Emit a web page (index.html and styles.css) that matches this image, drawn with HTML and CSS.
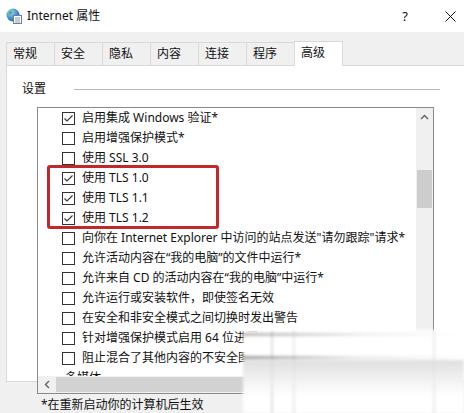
FILE: index.html
```html
<!DOCTYPE html>
<html lang="zh-CN">
<head>
<meta charset="utf-8">
<title>Internet 属性</title>
<link rel="stylesheet" href="styles.css">
</head>
<body>
<div class="titlebar">
  <svg class="app-icon" viewBox="0 0 16 16">
    <defs>
      <radialGradient id="g" cx="0.35" cy="0.3" r="0.8">
        <stop offset="0" stop-color="#9fd3f3"/>
        <stop offset="0.6" stop-color="#3d8fd0"/>
        <stop offset="1" stop-color="#1c5f9e"/>
      </radialGradient>
    </defs>
    <circle cx="7" cy="7" r="6.5" fill="url(#g)"/>
    <path d="M3 4 Q5 2.5 6.5 4 Q6 6 4 6.5 Q2.5 6 3 4Z" fill="#4fae4a"/>
    <path d="M8 8.5 Q10 7.5 11 9 Q10 11 8.5 11Z" fill="#4fae4a"/>
    <rect x="7.5" y="7.5" width="8" height="8" fill="#fff" stroke="#6d7f99"/>
    <path d="M9 10h5M9 12h5M9 14h5" stroke="#6d7f99" stroke-width="0.8"/>
  </svg>
  <span class="title">Internet 属性</span>
  <span class="help">?</span>
  <svg class="close" viewBox="0 0 11 11"><path d="M0.5 0.5L10.5 10.5M10.5 0.5L0.5 10.5" stroke="#111" stroke-width="1"/></svg>
</div>

<div class="main">
  <div class="tabs">
    <div class="tab">常规</div>
    <div class="tab">安全</div>
    <div class="tab">隐私</div>
    <div class="tab">内容</div>
    <div class="tab">连接</div>
    <div class="tab">程序</div>
    <div class="tab active">高级</div>
  </div>
  <div class="panel">
    <div class="group-head"><span>设置</span><div class="rule"></div></div>
    <div class="listbox">
      <div class="list">
        <div class="row"><span class="cb checked"><svg viewBox="0 0 11 11"><path d="M1.5 5.5L4 8L9.5 2.5"/></svg></span>启用集成 Windows 验证*</div>
        <div class="row"><span class="cb"></span>启用增强保护模式*</div>
        <div class="row"><span class="cb"></span>使用 SSL 3.0</div>
        <div class="row"><span class="cb checked"><svg viewBox="0 0 11 11"><path d="M1.5 5.5L4 8L9.5 2.5"/></svg></span>使用 TLS 1.0</div>
        <div class="row"><span class="cb checked"><svg viewBox="0 0 11 11"><path d="M1.5 5.5L4 8L9.5 2.5"/></svg></span>使用 TLS 1.1</div>
        <div class="row"><span class="cb checked"><svg viewBox="0 0 11 11"><path d="M1.5 5.5L4 8L9.5 2.5"/></svg></span>使用 TLS 1.2</div>
        <div class="row"><span class="cb"></span>向你在 Internet Explorer 中访问的站点发送"请勿跟踪"请求*</div>
        <div class="row"><span class="cb"></span>允许活动内容在“我的电脑”的文件中运行*</div>
        <div class="row"><span class="cb"></span>允许来自 CD 的活动内容在“我的电脑”中运行*</div>
        <div class="row"><span class="cb"></span>允许运行或安装软件，即使签名无效</div>
        <div class="row"><span class="cb"></span>在安全和非安全模式之间切换时发出警告</div>
        <div class="row"><span class="cb"></span>针对增强保护模式启用 64 位进程*</div>
        <div class="row"><span class="cb"></span>阻止混合了其他内容的不安全图像</div>
        <div class="row group"><svg class="tri" viewBox="0 0 8 8"><path d="M7 1V7H1Z" fill="#555"/></svg>多媒体</div>
      </div>
      <div class="vscroll">
        <div class="arrow"><svg viewBox="0 0 9 6"><path d="M1 5L4.5 1.5L8 5" fill="none" stroke="#606060" stroke-width="1.4"/></svg></div>
        <div class="vthumb"></div>
      </div>
      <div class="hscroll">
        <div class="arrow"><svg viewBox="0 0 6 9"><path d="M5 1L1.5 4.5L5 8" fill="none" stroke="#606060" stroke-width="1.4"/></svg></div>
        <div class="hthumb"></div>
      </div>
      <div class="corner"></div>
    </div>
    <div class="note">*在重新启动你的计算机后生效</div>
  </div>
</div>

<div class="highlight"></div>
<div class="watermark"></div>
</body>
</html>
```

FILE: styles.css
```css
* { box-sizing: border-box; }
html, body { margin: 0; padding: 0; }
body {
  width: 464px;
  height: 413px;
  overflow: hidden;
  position: relative;
  background: #fff;
  font-family: "Noto Sans", "Noto Sans CJK SC", sans-serif;
  font-size: 12px;
  color: #111;
}

.titlebar {
  height: 32px;
  display: flex;
  align-items: center;
  padding-left: 6px;
  background: #fff;
}
.app-icon { width: 16px; height: 16px; margin-right: 5px; }
.title { line-height: 16px; }
.help { margin-left: auto; font-size: 13px; line-height: 16px; }
.close { width: 11px; height: 11px; margin-left: 37px; margin-right: 8px; }

.main {
  background: #f0f0f0;
  height: 381px;
  padding: 10px 0 0 6px;
}
.tabs {
  display: flex;
  align-items: flex-start;
  height: 24px;
  margin-bottom: -1px;
  position: relative;
  z-index: 1;
}
.tab {
  width: 49px;
  height: 23px;
  margin-right: -1px;
  border: 1px solid #d9d9d9;
  border-bottom: none;
  padding-left: 6px;
  line-height: 21px;
  background: #f0f0f0;
}
.tab.active {
  height: 25px;
  margin-top: -1px;
  background: #fff;
}

.panel {
  background: #fff;
  border: 1px solid #d9d9d9;
  border-right: none;
  height: 317px;
  padding: 14px 0 0 15px;
}
.group-head {
  display: flex;
  align-items: center;
  height: 18px;
}
.group-head span { line-height: 18px; }
.rule {
  width: 366px;
  height: 1px;
  margin-left: 28px;
  background: #b9b9b9;
}

.listbox {
  margin: 9px 0 0 15px;
  width: 397px;
  height: 287px;
  border: 1px solid #8a8a8a;
  display: grid;
  grid-template-columns: 1fr 17px;
  grid-template-rows: 268px 17px;
}
.list { overflow: hidden; }
.row {
  height: 20px;
  display: flex;
  align-items: center;
  padding-left: 24px;
  white-space: nowrap;
  line-height: 20px;
}
.cb {
  width: 13px;
  height: 13px;
  flex: none;
  border: 1px solid #333;
  margin-right: 7px;
  background: #fff;
}
.cb svg { display: block; width: 11px; height: 11px; }
.cb svg path { fill: none; stroke: #333; stroke-width: 1.1; }
.row.group { padding-left: 8px; }
.tri { width: 7px; height: 7px; margin-right: 12px; }

.vscroll { background: #f0f0f0; }
.vscroll .arrow, .hscroll .arrow {
  width: 17px;
  height: 17px;
  display: flex;
  align-items: center;
  justify-content: center;
  flex: none;
}
.vscroll .arrow svg { width: 9px; height: 6px; }
.hscroll .arrow svg { width: 6px; height: 9px; }
.vthumb {
  margin: 45px 1px 0;
  height: 38px;
  background: #cdcdcd;
}
.hscroll {
  background: #f0f0f0;
  display: flex;
  align-items: center;
}
.hthumb {
  margin-left: 1px;
  width: 250px;
  height: 15px;
  background: #d2d2d2;
}
.corner { background: #f0f0f0; }

.note {
  margin: 3px 0 0 19px;
  line-height: 16px;
  white-space: nowrap;
}

.highlight {
  position: absolute;
  left: 47px;
  top: 165px;
  width: 172px;
  height: 64px;
  border: 3px solid #c4272b;
  border-radius: 3px;
}

.watermark {
  position: absolute;
  left: 243px;
  top: 330px;
  width: 221px;
  height: 83px;
  background:
    linear-gradient(to right, rgba(120,120,120,0.55), rgba(200,200,200,0.3) 55%, rgba(255,255,255,0)) 0 3px / 100% 3px no-repeat,
    linear-gradient(to right, rgba(90,90,90,0.6), rgba(190,190,190,0.35) 50%, rgba(255,255,255,0)) 0 26px / 100% 3px no-repeat,
    linear-gradient(to bottom, rgba(215,215,215,0.8), rgba(235,235,235,0.6) 60%, rgba(255,255,255,0)) 0 30px / 100% 36px no-repeat,
    linear-gradient(rgba(200,200,200,0.6), rgba(200,200,200,0.6)) 28px 0 / 2px 100% no-repeat,
    linear-gradient(rgba(215,215,215,0.5), rgba(215,215,215,0.5)) 50px 0 / 2px 100% no-repeat,
    linear-gradient(rgba(215,215,215,0.5), rgba(215,215,215,0.5)) 190px 0 / 2px 100% no-repeat,
    #fff;
  filter: blur(1.5px);
}
```
